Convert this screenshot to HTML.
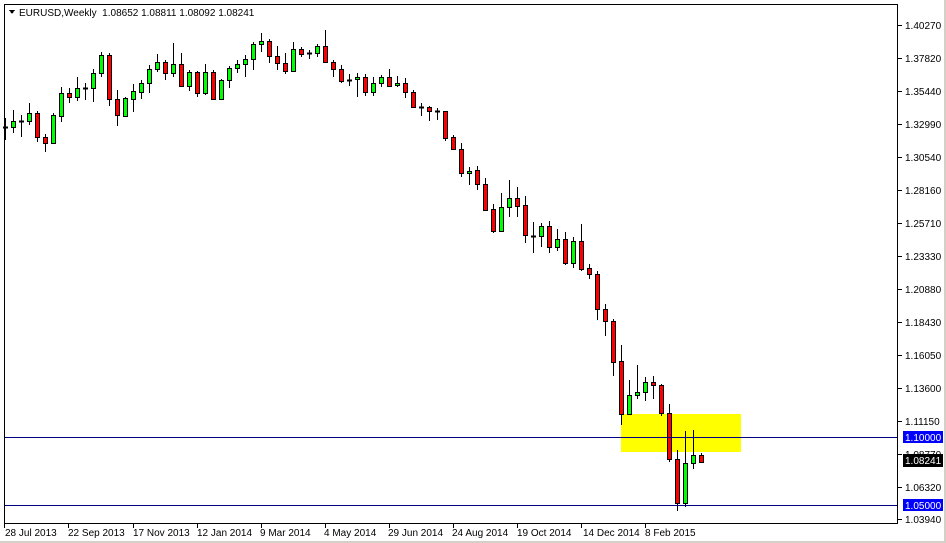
<!DOCTYPE html>
<html><head><meta charset="utf-8"><style>
html,body{margin:0;padding:0;background:#fff;}
svg{display:block;font-family:"Liberation Sans",Tahoma,sans-serif;font-size:10px;}
</style></head><body>
<svg id="s" width="946" height="543" viewBox="0 0 946 543" xmlns="http://www.w3.org/2000/svg" shape-rendering="crispEdges">
<rect x="0" y="0" width="946" height="543" fill="#fff"/>
<rect x="944" y="0" width="2" height="543" fill="#d4d0c8"/>
<rect x="0" y="541" width="946" height="2" fill="#d4d0c8"/>
<rect x="621" y="414" width="120" height="38" fill="#ffff00"/>
<g id="c"></g>
<line x1="4" y1="437.5" x2="897" y2="437.5" stroke="#000080" stroke-width="1"/>
<line x1="4" y1="505.5" x2="897" y2="505.5" stroke="#000080" stroke-width="1"/>
<rect x="4.5" y="4.5" width="893" height="519" fill="none" stroke="#000"/>
<path d="M9 10 L15 10 L12 14 Z" fill="#000"/>
<text x="19" y="16" fill="#000">EURUSD,Weekly&#160; 1.08652 1.08811 1.08092 1.08241</text>
<g fill="#000" text-anchor="start">
<text x="905" y="29">1.40270</text>
<text x="905" y="62">1.37820</text>
<text x="905" y="95">1.35440</text>
<text x="905" y="128">1.32990</text>
<text x="905" y="161">1.30540</text>
<text x="905" y="194">1.28160</text>
<text x="905" y="227">1.25710</text>
<text x="905" y="260">1.23330</text>
<text x="905" y="293">1.20880</text>
<text x="905" y="326">1.18430</text>
<text x="905" y="359">1.16050</text>
<text x="905" y="392">1.13600</text>
<text x="905" y="425">1.11150</text>
<text x="905" y="458">1.08770</text>
<text x="905" y="491">1.06320</text>
<text x="905" y="523">1.03940</text>
</g>
<g stroke="#000">
<line x1="898" y1="25.5" x2="902" y2="25.5"/><line x1="898" y1="58.5" x2="902" y2="58.5"/><line x1="898" y1="91.5" x2="902" y2="91.5"/><line x1="898" y1="124.5" x2="902" y2="124.5"/><line x1="898" y1="157.5" x2="902" y2="157.5"/><line x1="898" y1="190.5" x2="902" y2="190.5"/><line x1="898" y1="223.5" x2="902" y2="223.5"/><line x1="898" y1="256.5" x2="902" y2="256.5"/><line x1="898" y1="289.5" x2="902" y2="289.5"/><line x1="898" y1="322.5" x2="902" y2="322.5"/><line x1="898" y1="355.5" x2="902" y2="355.5"/><line x1="898" y1="388.5" x2="902" y2="388.5"/><line x1="898" y1="421.5" x2="902" y2="421.5"/><line x1="898" y1="454.5" x2="902" y2="454.5"/><line x1="898" y1="487.5" x2="902" y2="487.5"/><line x1="898" y1="519.5" x2="902" y2="519.5"/>
</g>
<rect x="903" y="431" width="40" height="12" fill="#0000ff"/>
<text x="905" y="441" fill="#fff">1.10000</text>
<rect x="903" y="454" width="40" height="13" fill="#000"/>
<text x="905" y="464" fill="#fff">1.08241</text>
<rect x="903" y="499" width="40" height="12" fill="#0000ff"/>
<text x="905" y="509" fill="#fff">1.05000</text>
<g fill="#000">
<text x="5" y="536">28 Jul 2013</text>
<text x="68" y="536">22 Sep 2013</text>
<text x="133" y="536">17 Nov 2013</text>
<text x="197" y="536">12 Jan 2014</text>
<text x="260" y="536">9 Mar 2014</text>
<text x="324" y="536">4 May 2014</text>
<text x="388" y="536">29 Jun 2014</text>
<text x="452" y="536">24 Aug 2014</text>
<text x="517" y="536">19 Oct 2014</text>
<text x="583" y="536">14 Dec 2014</text>
<text x="645" y="536">8 Feb 2015</text>
</g>
<g stroke="#000">
<line x1="4.5" y1="524" x2="4.5" y2="528"/><line x1="68.5" y1="524" x2="68.5" y2="528"/><line x1="133.5" y1="524" x2="133.5" y2="528"/><line x1="197.5" y1="524" x2="197.5" y2="528"/><line x1="261.5" y1="524" x2="261.5" y2="528"/><line x1="325.5" y1="524" x2="325.5" y2="528"/><line x1="389.5" y1="524" x2="389.5" y2="528"/><line x1="453.5" y1="524" x2="453.5" y2="528"/><line x1="517.5" y1="524" x2="517.5" y2="528"/><line x1="581.5" y1="524" x2="581.5" y2="528"/><line x1="645.5" y1="524" x2="645.5" y2="528"/>
</g>
</svg>
<script>
var d=[
[5,127,127,118,140,'d'],[13,121,127,110,133,'g'],[21,121,121,115,137,'d'],[29,113,121,103,125,'g'],[37,113,137,111,142,'r'],
[45,137,143,134,152,'r'],[53,115,143,113,143,'g'],[61,93,116,87,122,'g'],[69,93,97,88,103,'r'],[77,88,97,77,101,'g'],
[85,88,88,83,100,'d'],[93,73,88,69,102,'g'],[101,55,73,52,77,'g'],[109,55,99,53,106,'r'],[117,99,115,90,126,'r'],
[125,98,116,97,117,'g'],[133,91,99,84,112,'g'],[141,83,92,80,99,'g'],[149,69,83,65,93,'g'],[157,62,69,54,72,'g'],
[165,62,73,60,80,'r'],[173,64,73,43,77,'g'],[181,64,86,53,87,'r'],[189,72,86,70,91,'g'],[197,72,93,71,97,'r'],
[205,72,93,64,95,'g'],[213,72,99,70,100,'r'],[221,80,99,79,100,'g'],[229,68,80,66,88,'g'],[237,64,68,60,73,'g'],
[245,59,64,55,77,'g'],[253,44,59,42,70,'g'],[261,41,44,33,52,'g'],[269,41,56,39,63,'r'],[277,56,63,46,70,'r'],
[285,63,71,53,74,'r'],[293,49,71,42,72,'g'],[301,49,54,47,57,'r'],[309,53,53,50,59,'d'],[317,46,53,44,57,'g'],
[325,46,62,30,63,'r'],[333,62,69,60,77,'r'],[341,69,81,65,83,'r'],[349,80,80,74,86,'d'],[357,77,79,73,97,'g'],
[365,77,92,74,96,'r'],[373,83,92,77,96,'g'],[381,77,83,75,87,'g'],[389,77,86,69,87,'r'],[397,83,85,76,87,'g'],
[405,83,92,78,98,'r'],[413,92,107,90,108,'r'],[421,107,107,103,116,'d'],[429,107,111,106,121,'r'],[437,111,111,108,120,'d'],
[445,111,138,111,141,'r'],[453,137,149,135,150,'r'],[461,149,173,143,177,'r'],[469,171,173,167,185,'g'],[477,170,184,166,190,'r'],
[485,184,210,178,211,'r'],[493,209,231,204,233,'r'],[501,207,231,193,232,'g'],[509,198,207,180,217,'g'],[517,198,206,187,217,'r'],
[525,205,235,196,243,'r'],[533,236,236,222,253,'d'],[541,226,236,223,247,'g'],[549,226,247,221,253,'r'],[557,239,247,229,251,'g'],
[565,239,263,232,265,'r'],[573,241,263,237,268,'g'],[581,241,269,224,271,'r'],[589,268,274,264,279,'r'],[597,274,309,271,320,'r'],
[605,309,321,304,336,'r'],[613,321,362,319,376,'r'],[621,361,414,345,425,'r'],[629,395,414,380,415,'g'],[637,392,395,365,399,'g'],
[645,382,392,377,401,'g'],[653,382,385,376,399,'r'],[661,385,413,384,416,'r'],[669,413,459,404,462,'r'],[677,459,503,450,511,'r'],
[685,463,503,431,507,'g'],[693,455,463,430,469,'g'],[701,455,462,453,463,'r']];
var g=document.getElementById('c'),h='';
d.forEach(function(c){var x=c[0],t=Math.min(c[1],c[2]),b=Math.max(c[1],c[2]);
h+='<line x1="'+(x+.5)+'" y1="'+c[3]+'" x2="'+(x+.5)+'" y2="'+c[4]+'" stroke="#000"/>';
if(c[5]=='d'){h+='<line x1="'+(x-2)+'" y1="'+(t+.5)+'" x2="'+(x+3)+'" y2="'+(t+.5)+'" stroke="#000" stroke-width="2"/>';}
else{h+='<rect x="'+(x-1.5)+'" y="'+(t+.5)+'" width="4" height="'+Math.max(b-t,1)+'" fill="'+(c[5]=='g'?'#00ff00':'#ff0000')+'" stroke="#000" stroke-width="1"/>';}
});
g.innerHTML=h;
</script>
</body></html>
